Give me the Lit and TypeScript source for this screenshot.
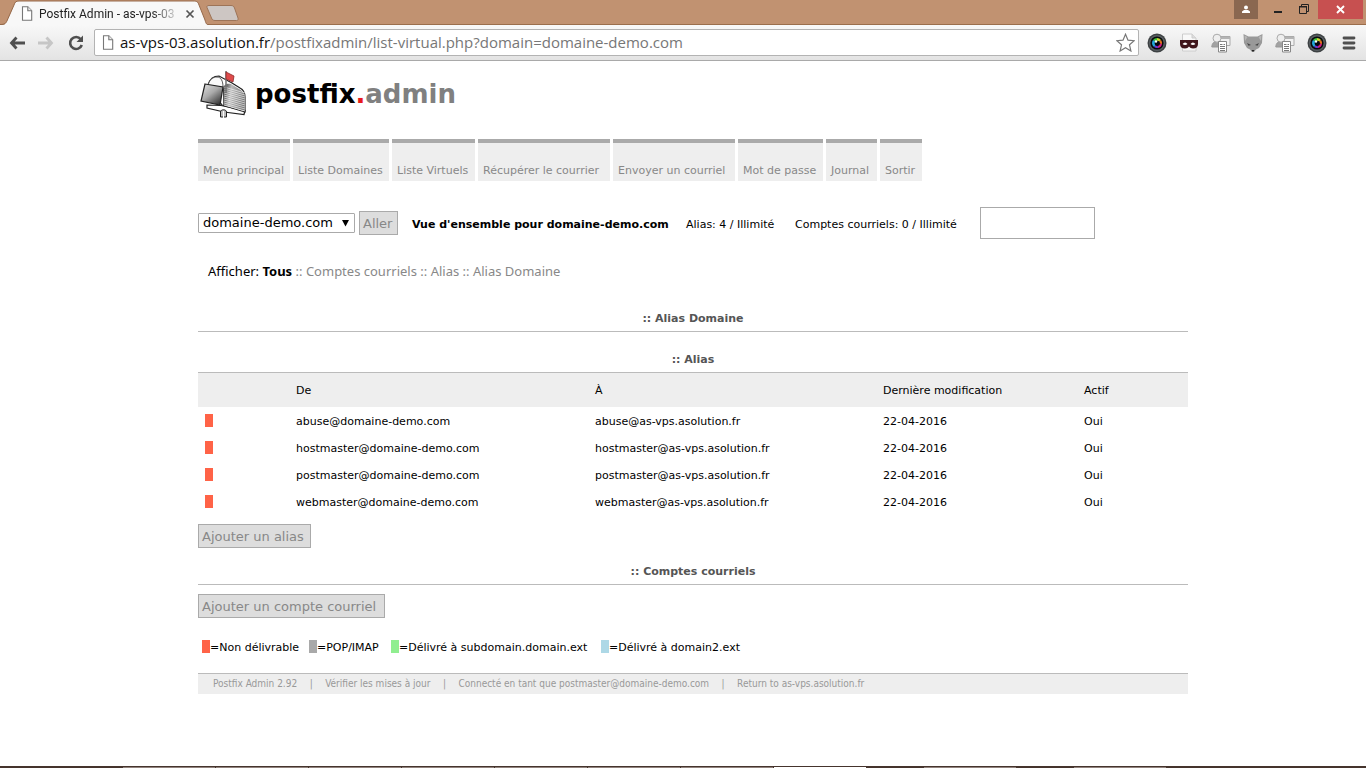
import { LitElement, html, svg, css } from "lit";
import { customElement, state } from "lit/decorators.js";

const NAV = ["Menu principal", "Liste Domaines", "Liste Virtuels", "Récupérer le courrier", "Envoyer un courriel", "Mot de passe", "Journal", "Sortir"];
const NAMES = ["abuse", "hostmaster", "postmaster", "webmaster"];
const LEGEND = [
  ["tomato", "Non délivrable"],
  ["grey", "POP/IMAP"],
  ["green", "Délivré à subdomain.domain.ext"],
  ["blue", "Délivré à domain2.ext"],
];

const lens = () => html`<svg width="20" height="20" viewBox="0 0 20 20">
  <circle cx="10" cy="10" r="9.5" fill="#3d4143"/><circle cx="10" cy="10" r="8" fill="#5a6063"/>
  <circle cx="10" cy="10" r="6.6" fill="#08090c"/>
  <path d="M10 10 6 7a5 5 0 0 1 4-2z" fill="#3cc43c"/><path d="M10 10V5a5 5 0 0 1 4 2z" fill="#c9d530"/>
  <path d="m10 10 4-3a5 5 0 0 1 1 4z" fill="#e0701c"/><path d="m10 10 5 1a5 5 0 0 1-4 4z" fill="#d01c80"/>
  <path d="m10 10 1 5a5 5 0 0 1-4-1z" fill="#6838d8"/><path d="M10 10 7 14a5 5 0 0 1-1-7z" fill="#20a8dc"/>
  <circle cx="10.3" cy="10.3" r="2.6" fill="#07080c"/><circle cx="9" cy="8.5" r="1.2" fill="#fff"/></svg>`;

const contact = () => html`<svg width="20" height="20" viewBox="0 0 20 20">
  <path d="M7.500 3.500h11.500v9H7.500z" fill="#f1f1f1" stroke="#aaa"/><path d="M8 4h11v2H8z" fill="#b4b4b4"/>
  <path d="M.8 14c.2-4 2.200-5.500 5.200-5.500s4.500 1.500 4.800 5.500z" fill="#a2a2a2" stroke="#999"/>
  <circle cx="6" cy="5.200" r="4" fill="#eee" stroke="#aaa"/>
  <path d="M7.500 8.500h8V19h-8z" fill="#fff" stroke="#888"/>
  <path d="M9 11.500h2.500M12.500 11.500H14M9 13.500h5M9 15.500h5M9 17.500h5" stroke="#777"/></svg>`;

const pageIcon = () => html`<svg width="12" height="15" viewBox="0 0 12 15">
  <path d="M1.500.7h5.300l3.900 4v9.600H1.500z" fill="#fff" stroke="#777" stroke-width="1.100"/>
  <path d="M6.800.7v4h3.900" fill="#eee" stroke="#777" stroke-width="1.100"/></svg>`;

@customElement("browser-chrome")
export class BrowserChrome extends LitElement {
  static styles = css`
    :host { display: block; font-family: "Open Sans", "Noto Sans", sans-serif; }
    * { box-sizing: border-box; }
    svg { display: block; flex: none; }
    button { border: 0; background: none; padding: 0; margin: 0; display: block; }
    .strip { display: flex; height: 25px; background: #c19271; align-items: flex-start; box-shadow: inset 0 -1px #9b6e4c; }
    .tab { flex: none; width: 209px; height: 25px; display: grid; }
    .tab > * { grid-area: 1 / 1; }
    .tabline { display: flex; align-items: center; padding: 2px 0 0 21px; }
    .title { width: 138px; margin: 0 8px 0 6px; font: 12px/20px Roboto, sans-serif; white-space: nowrap; color: #222;
      -webkit-mask-image: linear-gradient(90deg, #000 112px, transparent 142px); mask-image: linear-gradient(90deg, #000 112px, transparent 142px); }
    .newtab { margin-top: 5px; margin-left: -3px; }
    .space { flex: 1; }
    .user { width: 24px; height: 19px; background: #8a6750; display: grid; place-items: center; }
    .win { width: 30px; height: 19px; display: grid; place-items: center; }
    .winwrap { display: flex; }
    .close { width: 45px; height: 19px; background: #c75050; display: grid; place-items: center; margin-right: 3px; }
    .bar { display: flex; align-items: center; height: 36px; padding: 0 10px 0 9px; border-bottom: 1px solid #a9a9a9;
      background: linear-gradient(#f8f8f8, #e3e3e3); }
    .back { margin-right: 10px; }
    .fwd { margin-right: 12px; }
    .reload { margin-right: 9px; }
    .omni { flex: 1; display: flex; align-items: center; height: 27px; border: 1px solid #b3b3b3; border-radius: 2px; background: #fff; padding: 0 3px 0 7px; }
    .url { flex: 1; display: grid; margin-left: 6px; }
    .url > * { grid-area: 1 / 1; font: 15px/21px "Open Sans", "Noto Sans", sans-serif; padding: 0; border: 0; white-space: pre; }
    .url input { color: transparent; background: transparent; outline: none; min-width: 0; width: 100%; }
    .host { color: #111; }
    .path { color: #777; }
    .exts { display: flex; gap: 12px; margin: 0 15px 0 8px; }
  `;

  render() {
    return html`
      <div class="strip">
        <div class="tab">
          <svg width="209" height="25" viewBox="0 0 209 25">
            <path d="M0 25c5 0 6-1 8-6L14 5c1-3 2-4 5-4h174c4 0 5 1 6 4l6 15c1 4 2 5 4 5z" fill="#f8f8f8"/>
            <path d="M0 24.500c5 0 6-1 8-6L14 5c1-3 2-4 5-4h174c4 0 5 1 6 4l6 15c1 4 2 5 4 4.500" fill="none" stroke="#96694a"/>
          </svg>
          <div class="tabline">${pageIcon()}<span class="title">Postfix Admin - as-vps-03</span>
            <button aria-label="Fermer l'onglet"><svg width="10" height="10" viewBox="0 0 10 10"><path d="m1.500 1.500 7 7M8.500 1.500l-7 7" stroke="#555" stroke-width="1.700"/></svg></button>
          </div>
        </div>
        <button class="newtab" aria-label="Nouvel onglet"><svg width="33" height="16" viewBox="0 0 33 16"><path d="M3 .5h22c2 0 3 1 3.500 2.500l3.500 10c.5 1.500 0 2.500-1.500 2.500H9c-2 0-3-1-3.500-2.500L1 2.500C.5 1 1.500.5 3 .5z" fill="#cdc6c3" stroke="#9d7458"/></svg></button>
        <span class="space"></span>
        <button class="user" aria-label="Profil"><svg width="10" height="10" viewBox="0 0 10 10"><circle cx="5" cy="2.500" r="2" fill="#fff"/><path d="M1 8V6.500L3 5h4l2 1.500V8z" fill="#fff"/></svg></button>
        <span class="winwrap">
        <button class="win" aria-label="Réduire"><svg width="30" height="19" viewBox="0 0 30 19"><path d="M16 11h8v2h-8z" fill="#222"/></svg></button>
        <button class="win" aria-label="Restaurer"><svg width="30" height="19" viewBox="0 0 30 19"><path d="M11.500 6.500h7v7h-7zM13.500 6V4.500h7v7H19" fill="none" stroke="#222" stroke-width="1"/><path d="M11 6h8v1.500h-8z" fill="#222"/></svg></button>
        </span>
        <button class="close" aria-label="Fermer"><svg width="9" height="9" viewBox="0 0 9 9"><path d="m1 1 7 7M8 1 1 8" stroke="#fff" stroke-width="1.900"/></svg></button>
      </div>
      <div class="bar">
        <button class="back" aria-label="Précédent"><svg width="18" height="16" viewBox="0 0 18 16"><path d="M7.500 2.500 2.500 8l5 5.500M3 8h13" fill="none" stroke="#4f4f4f" stroke-width="2.800"/></svg></button>
        <button class="fwd" aria-label="Suivant"><svg width="18" height="16" viewBox="0 0 18 16"><path d="m9.500 2.500 5 5.500-5 5.500M14 8H1" fill="none" stroke="#c6c6c6" stroke-width="2.800"/></svg></button>
        <button class="reload" aria-label="Actualiser"><svg width="18" height="18" viewBox="0 0 18 18"><path d="M13.800 5.200A6 6 0 1 0 14.800 11" fill="none" stroke="#4f4f4f" stroke-width="2.600"/><path d="M16 1.500V8H9.500z" fill="#4f4f4f"/></svg></button>
        <div class="omni">
          ${pageIcon()}
          <label class="url">
            <span><span class="host">as-vps-03.asolution.fr</span><span class="path">/postfixadmin/list-virtual.php?domain=domaine-demo.com</span></span>
            <input type="text" aria-label="Adresse">
          </label>
          <svg width="19" height="19" viewBox="0 0 19 19"><path d="m9.500 1.300 2.500 5.900 6.200.5-4.700 4.100 1.400 6.200-5.400-3.300L4.100 18l1.400-6.200L.8 7.700 7 7.200z" fill="#fff" stroke="#777" stroke-width="1.200"/></svg>
        </div>
        <div class="exts">
          ${lens()}
          <svg width="20" height="20" viewBox="0 0 20 20"><path d="M3.500 1H13l4 4v13H3.500z" fill="#f8f8f8" stroke="#ccc"/><path d="M13 1v4h4" fill="#ddd" stroke="#ccc"/><path d="M1 7h18v4c0 3-2 4.500-5 4.500-2 0-3-1-4-2-1 1-2 2-4 2-3 0-5-1.500-5-4.500z" fill="#40161b"/><path d="M3.500 11q2.700-3 5 0-2.300 2-5 0M11.500 11q2.300-3 5 0-2.700 2-5 0" fill="#fff"/></svg>
          ${contact()}
          <svg width="20" height="20" viewBox="0 0 20 20"><path d="m.5 1 5 2.500h9l5-2.500-.5 9-3 5-3 1.500-2 2.500H9L7 16.500 4 15l-3-5z" fill="#999"/><path d="m1.500 2.500 3 1.500-2.500 4zM18.500 2.500l-3 1.500L18 8z" fill="#b8b8b8"/><path d="m4 10 4 2-2.500.8zM16 10l-4 2 2.500.8z" fill="#444"/><path d="M8.500 17h3l-1.500 2z" fill="#222"/></svg>
          ${contact()}
          ${lens()}
        </div>
        <button aria-label="Menu"><svg width="14" height="14" viewBox="0 0 14 14"><path d="M2 2h10M2 7h10M2 12h10" stroke="#4f4f4f" stroke-width="2.800" stroke-linecap="round"/></svg></button>
      </div>`;
  }
}

@customElement("postfix-logo")
export class PostfixLogo extends LitElement {
  static styles = css`
    :host { display: flex; align-items: center; gap: 6px; font: bold 26px/32px "DejaVu Sans", Verdana, sans-serif; color: #000; }
    svg { display: block; }
    .dot { color: #e8191c; }
    .grey { color: #808080; }
  `;
  render() {
    const lines = [0, 1, 2, 3, 4, 5, 6, 7, 8, 9];
    return html`
      <svg width="49" height="50" viewBox="0 0 49 50">
        <defs>
          <linearGradient id="shade" x2="1" y2=".2"><stop stop-color="#222"/><stop offset=".4" stop-color="#bbb"/><stop offset="1" stop-color="#777"/></linearGradient>
          <linearGradient id="door" x2=".8" y2="1"><stop stop-color="#e4e4e4"/><stop offset=".5" stop-color="#aaa"/><stop offset="1" stop-color="#333"/></linearGradient>
        </defs>
        <path d="M7 36v3l17 4 20 2.500 1-4-24-5z" fill="#fff" stroke="#222" stroke-width="1.200"/>
        <path d="M8 16c2-7 6-9 11-9l13 7 8 5c4 2 5 5 5 9v15l-23-7z" fill="#fff" stroke="#222" stroke-width="1.200"/>
        <path d="M23 20c1-5 4-6 8-5l8 5c4 2 6 5 6 9v13l-22-6z" fill="url(#shade)"/>
        ${lines.map((i) => svg`<path d="M24 ${18 + i * 2}l21 6" stroke="#fff" stroke-width=".6"/>`)}
        <path d="M8 16c2-6 5-8 9-8s6 4 6 10" fill="#fafafa" stroke="#444" stroke-width=".9"/>
        <path d="M5 15l18 3-3 18L1 32z" fill="url(#door)" stroke="#222" stroke-width="1.200"/>
        <path d="M20.500 43c0-3 6-3 6 0v5h-6z" fill="#bbb" stroke="#222"/><path d="M23.500 42v7" stroke="#fff"/>
        <path d="M26 2v22" stroke="#777" stroke-width="1.600"/>
        <path d="m26 3 8 4-1 6-7-3z" fill="#df4b4b" stroke="#8d2b2b" stroke-width=".8"/>
      </svg>
      <span>postfix<span class="dot">.</span><span class="grey">admin</span></span>`;
  }
}

@customElement("app-root")
export class AppRoot extends LitElement {
  @state() private domain = "domaine-demo.com";

  static styles = css`
    :host { display: flex; flex-direction: column; min-height: 100vh; background: #fff; color: #000; font: 11px/13px "DejaVu Sans", Verdana, sans-serif; }
    * { box-sizing: border-box; }
    a { color: #888; text-decoration: none; }
    .page { flex: 1; padding: 8px 20px 0 40px; }
    .inner { max-width: 990px; margin: 0 auto; }
    .logo { padding-left: 2px; }
    .nav { display: grid; grid-template-columns: 92px 96px 83px 132px 122px 85px 51px 42px; gap: 3px; margin-top: 20px; }
    .nav a { border-top: 4px solid #aaa; background: #eee; padding: 21px 5px 3px; line-height: 14px; white-space: nowrap; }
    .overview { display: grid; grid-template-columns: 200px 260px 95px 171px 115px; column-gap: 14px; align-items: center; margin-top: 26px; white-space: nowrap; }
    .pick { display: flex; align-items: center; justify-content: space-between; }
    .go { width: 39px; }
    .item { padding-top: 2px; }
    select { width: 157px; height: 20px; padding: 0 5px 0 4px; margin: 0; border: 1px solid #aaa; border-radius: 1px; appearance: none; color: #000;
      font: 13px/18px "DejaVu Sans", Verdana, sans-serif;
      background: #fff url("data:image/svg+xml,%3Csvg xmlns='http://www.w3.org/2000/svg' width='7' height='7'%3E%3Cpath d='M0 0h7L3.500 6.500z'/%3E%3C/svg%3E") no-repeat right 5px center; }
    .btn { height: 24px; padding: 2px 3px 0; margin: 0; border: 1px solid #aaa; border-radius: 0; background: #ddd; color: #888; text-align: left; font: 13px/20px "DejaVu Sans", Verdana, sans-serif; }
    .search { width: 115px; height: 32px; border: 1px solid #aaa; padding: 2px 6px; font: 11px "DejaVu Sans", Verdana, sans-serif; }
    .filter { font: 13px/16px "Noto Sans", Tahoma, sans-serif; margin-top: 24px; padding-left: 10px; color: #888; }
    .filter b, .filter .label { color: #000; }
    h2 { margin: 0; font-size: 11px; line-height: 14px; color: #555; text-align: center; padding-bottom: 5px; border-bottom: 1px solid #bbb; }
    .h-domain { margin-top: 33px; }
    .h-alias { margin-top: 21px; }
    .h-mail { margin-top: 17px; margin-bottom: 9px; }
    table { width: 100%; border-collapse: collapse; table-layout: fixed; }
    th, td { font-weight: normal; text-align: left; padding: 0 5px; height: 27px; }
    td + td { padding-top: 2px; }
    th { background: #eee; height: 34px; }
    .c0 { width: 93px; }
    .c1 { width: 299px; }
    .c2 { width: 288px; }
    .c3 { width: 201px; }
    .chip { display: inline-block; width: 8px; height: 13px; vertical-align: top; }
    td .chip { margin-left: 2px; }
    .tomato { background: #ff6347; }
    .grey { background: #a9a9a9; }
    .green { background: #90ee90; }
    .blue { background: #add8e6; }
    .add { margin-top: 9px; }
    .add-alias { width: 113px; }
    .add-mail { width: 187px; }
    .legend { display: grid; grid-template-columns: 99px 74px 202px auto; gap: 8px; padding-left: 4px; margin-top: 22px; line-height: 15px; white-space: nowrap; }
    .footer { display: flex; align-items: center; height: 21px; margin-top: 18px; padding-left: 15px; border-top: 1px solid #bbb; background: #eee; color: #999;
      font: 10px/14px "DejaVu Sans Condensed", "DejaVu Sans", sans-serif; white-space: nowrap; }
    .footer a { color: #999; }
    .sep { width: 28px; text-align: center; }
    .task { height: 2px; background: #45342d; display: flex; padding: 1px 0 0 123px; gap: 1px; }
    .task span { width: 92px; background: #91837d; }
    .task .on { background: #fff; }
    .task .gap { margin-left: 57px; }
  `;

  render() {
    return html`
      <browser-chrome></browser-chrome>
      <main class="page"><div class="inner">
        <postfix-logo class="logo"></postfix-logo>
        <nav class="nav">${NAV.map((n) => html`<a href="#">${n}</a>`)}</nav>
        <form class="overview" @submit=${(e: Event) => e.preventDefault()}>
          <div class="pick">
            <select aria-label="Domaine" .value=${this.domain}><option>domaine-demo.com</option></select>
            <button class="btn go">Aller</button>
          </div>
          <b class="item">Vue d'ensemble pour domaine-demo.com</b>
          <span class="item">Alias: 4 / Illimité</span>
          <span class="item">Comptes courriels: 0 / Illimité</span>
          <input class="search" type="text" aria-label="Rechercher">
        </form>
        <div class="filter"><span class="label">Afficher: </span><b>Tous</b> :: <a href="#">Comptes courriels</a> :: <a href="#">Alias</a> :: <a href="#">Alias Domaine</a></div>
        <h2 class="h-domain">:: Alias Domaine</h2>
        <h2 class="h-alias">:: Alias</h2>
        <table>
          <thead><tr><th class="c0"></th><th class="c1">De</th><th class="c2">À</th><th class="c3">Dernière modification</th><th>Actif</th></tr></thead>
          <tbody>${NAMES.map((n) => html`<tr><td><span class="chip tomato"></span></td><td>${n}@domaine-demo.com</td><td>${n}@as-vps.asolution.fr</td><td>22-04-2016</td><td>Oui</td></tr>`)}</tbody>
        </table>
        <button class="btn add add-alias">Ajouter un alias</button>
        <h2 class="h-mail">:: Comptes courriels</h2>
        <button class="btn add-mail">Ajouter un compte courriel</button>
        <div class="legend">${LEGEND.map(([c, t]) => html`<span><span class="chip ${c}"></span>=${t}</span>`)}</div>
        <footer class="footer"><a href="#">Postfix Admin 2.92</a><span class="sep">|</span><a href="#">Vérifier les mises à jour</a><span class="sep">|</span><span>Connecté en tant que postmaster@domaine-demo.com</span><span class="sep">|</span><a href="#">Return to as-vps.asolution.fr</a></footer>
      </div></main>
      <div class="task">${[0, 1, 2, 3, 4, 5, 6].map(() => html`<span></span>`)}<span class="on"></span><span class="gap"></span><span class="gap"></span></div>`;
  }
}
